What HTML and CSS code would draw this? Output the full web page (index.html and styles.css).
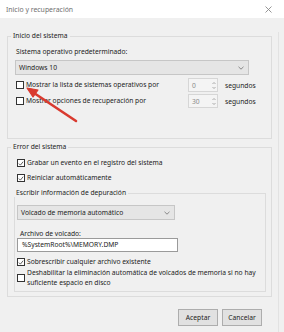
FILE: index.html
```html
<!DOCTYPE html>
<html lang="es">
<head>
<meta charset="utf-8">
<title>Inicio y recuperación</title>
<link rel="stylesheet" href="styles.css">
</head>
<body>
<div class="dialog">
  <div class="titlebar">
    <span class="title">Inicio y recuperación</span>
    <svg class="close" width="7" height="7" viewBox="0 0 7 7"><path d="M0.5 0.5 L6.5 6.5 M6.5 0.5 L0.5 6.5" stroke="#8a8a8a" stroke-width="0.9" fill="none"/></svg>
  </div>
  <div class="content">
    <fieldset class="group g1">
      <legend>Inicio del sistema</legend>
      <div class="lbl">Sistema operativo predeterminado:</div>
      <div class="select wide"><span>Windows 10</span><svg class="chev" width="6" height="4" viewBox="0 0 6 4"><path d="M0.5 0.8 L3 3.2 L5.5 0.8" stroke="#707070" stroke-width="0.8" fill="none"/></svg></div>
      <div class="spinrow r1">
        <div class="chk"><span class="box"></span><span>Mostrar la lista de sistemas operativos por</span></div>
        <div class="spin"><span>0</span><span class="arrows"><svg width="4" height="9" viewBox="0 0 4 9"><path d="M0.5 3 L2 1.5 L3.5 3 M0.5 6 L2 7.5 L3.5 6" stroke="#8a8a8a" stroke-width="0.7" fill="none"/></svg></span></div>
        <span class="unit">segundos</span>
      </div>
      <div class="spinrow r2">
        <div class="chk"><span class="box"></span><span>Mostrar opciones de recuperación por</span></div>
        <div class="spin"><span>30</span><span class="arrows"><svg width="4" height="9" viewBox="0 0 4 9"><path d="M0.5 3 L2 1.5 L3.5 3 M0.5 6 L2 7.5 L3.5 6" stroke="#8a8a8a" stroke-width="0.7" fill="none"/></svg></span></div>
        <span class="unit">segundos</span>
      </div>
    </fieldset>

    <fieldset class="group g2">
      <legend>Error del sistema</legend>
      <div class="chk c-grabar"><span class="box on"><svg width="7" height="7" viewBox="0 0 7 7"><path d="M1 3.6 L2.8 5.4 L6 1.4" stroke="#333" stroke-width="0.9" fill="none"/></svg></span><span>Grabar un evento en el registro del sistema</span></div>
      <div class="chk c-reini"><span class="box on"><svg width="7" height="7" viewBox="0 0 7 7"><path d="M1 3.6 L2.8 5.4 L6 1.4" stroke="#333" stroke-width="0.9" fill="none"/></svg></span><span>Reiniciar automáticamente</span></div>
      <fieldset class="group inner">
        <legend>Escribir información de depuración</legend>
        <div class="select narrow"><span>Volcado de memoria automático</span><svg class="chev" width="6" height="4" viewBox="0 0 6 4"><path d="M0.5 0.8 L3 3.2 L5.5 0.8" stroke="#707070" stroke-width="0.8" fill="none"/></svg></div>
        <div class="lbl arch">Archivo de volcado:</div>
        <div class="input">%SystemRoot%\MEMORY.DMP</div>
        <div class="chk c-sobre"><span class="box on"><svg width="7" height="7" viewBox="0 0 7 7"><path d="M1 3.6 L2.8 5.4 L6 1.4" stroke="#333" stroke-width="0.9" fill="none"/></svg></span><span>Sobrescribir cualquier archivo existente</span></div>
        <div class="chk two c-desh"><span class="box"></span><span>Deshabilitar la eliminación automática de volcados de memoria si no hay suficiente espacio en disco</span></div>
      </fieldset>
    </fieldset>

    <div class="buttons">
      <button class="btn">Aceptar</button>
      <button class="btn">Cancelar</button>
    </div>
  </div>
  <svg class="arrow" width="284" height="332" viewBox="0 0 284 332">
    <path d="M76 121 L34 93" stroke="#d93a2f" stroke-width="2.6" stroke-linecap="round" fill="none"/>
    <path d="M27 88 L38 90 L33 97 Z" fill="#d93a2f" stroke="#d93a2f" stroke-width="1.2" stroke-linejoin="round"/>
  </svg>
</div>
</body>
</html>
```
FILE: styles.css
```css
* { box-sizing: border-box; }
html, body { margin: 0; padding: 0; }
body {
  width: 284px;
  height: 332px;
  background: #f0f0f0;
  font-family: "Noto Sans", "Open Sans", sans-serif;
  font-size: 6.7px;
  color: #222;
  overflow: hidden;
}
.dialog {
  position: relative;
  width: 284px;
  height: 332px;
}
.titlebar {
  height: 18px;
  background: #fff;
  display: flex;
  align-items: center;
  justify-content: space-between;
  padding: 0 12px 0 6px;
}
.title { color: #707070; font-size: 6.9px; }
.close { display: block; }
.content {
  width: 279px;
  height: 314px;
  padding: 0 0 0 7px;
  border-right: 1px solid #e2e2e2;
}
.group {
  margin: 0;
  border: 1px solid #dcdcdc;
  min-width: 0;
}
.group legend {
  line-height: 8px;
  padding: 0 2px;
}
.g1 {
  margin-top: 14px;
  width: 265px;
  padding: 7px 0 30px 7px;
}
.g1 legend { margin-left: -4px; }
.lbl { line-height: 10px; padding-left: 1px; }
.select {
  height: 15px;
  background: #e5e5e5;
  border: 1px solid #c6c6c6;
  display: flex;
  align-items: center;
  justify-content: space-between;
  padding: 0 4px 0 3px;
  margin-top: 3px;
}
.select.wide { width: 234px; }
.select.narrow { width: 158px; margin-top: 8px; }
.spinrow {
  display: grid;
  grid-template-columns: 165px 30px auto;
  column-gap: 7px;
  align-items: center;
  height: 14px;
  padding-left: 1px;
}
.spinrow.r1 { margin-top: 3px; }
.spinrow.r2 { margin-top: 2px; }
.chk {
  display: flex;
  align-items: center;
  gap: 2px;
  line-height: 10px;
}
.box {
  flex: none;
  width: 8px;
  height: 8px;
  border: 1px solid #333;
  background: #fff;
  display: flex;
  align-items: center;
  justify-content: center;
}
.box svg { display: block; }
.spin {
  height: 14px;
  border: 1px solid #d6d6d6;
  background: #f4f4f4;
  color: #8a8a8a;
  display: flex;
  align-items: center;
  justify-content: space-between;
  padding: 0 1px 0 3px;
}
.arrows { display: flex; align-items: center; }
.arrows svg { display: block; }
.g2 {
  margin-top: 4px;
  width: 265px;
  padding: 7px 5px 0 6px;
}
.g2 legend { margin-left: -3px; }
.g2 > .chk { padding-left: 3px; }
.c-reini { margin-top: 5px; }
.inner {
  margin-top: 6px;
  margin-bottom: 4px;
  width: 252px;
  padding: 0 2px 3px 2px;
}
.lbl.arch { margin-top: 9px; line-height: 9px; padding-left: 3px; }
.input {
  width: 161px;
  height: 14px;
  background: #fff;
  border: 1px solid #9a9a9a;
  line-height: 12px;
  padding-left: 4px;
}
.c-sobre { margin-top: 5px; }
.chk.two { margin-top: 1px; width: 246px; }
.buttons {
  display: flex;
  gap: 4px;
  justify-content: flex-end;
  width: 255px;
  margin-top: 12px;
}
.btn {
  width: 40px;
  height: 17px;
  background: #e1e1e1;
  border: 1px solid #adadad;
  font-family: inherit;
  font-size: 6.7px;
  color: #222;
  padding: 0;
}
.arrow {
  position: absolute;
  left: 0;
  top: 0;
  pointer-events: none;
}
```
